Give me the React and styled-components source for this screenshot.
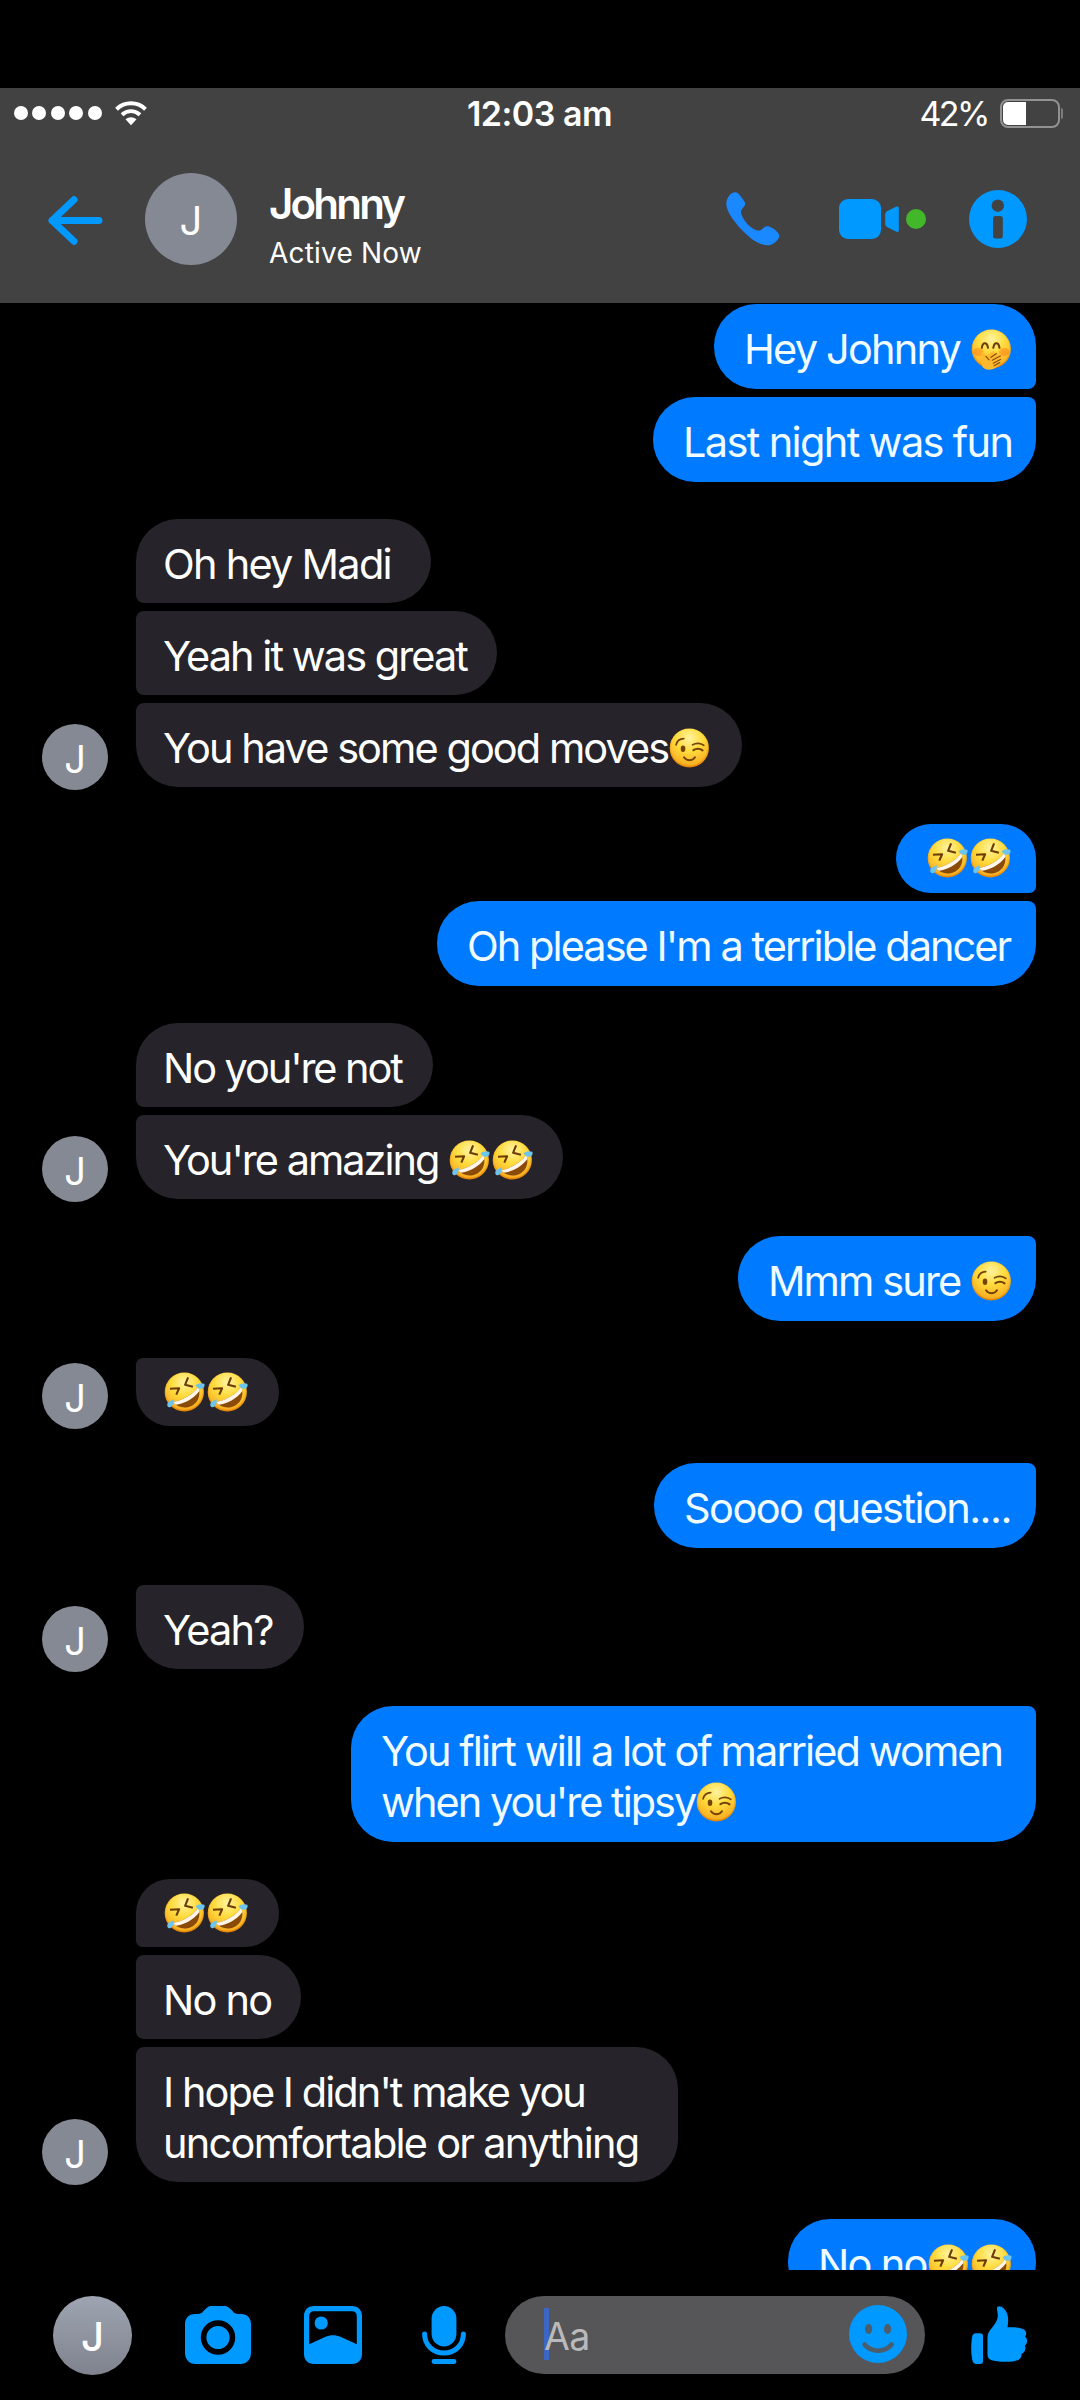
import styled, {createGlobalStyle, css} from "styled-components";

const color = {
    bar: "#424242",
    sent: "#007aff",
    received: "#26242a",
    accent: "#0099ff",
    call: "#1a88ff",
    online: "#42b72a",
    avatar: "#858994",
    input: "#565658",
};

// every line: [text, letter spacing, ...emojis]
const groups = [
    {
        from: "me",
        messages: [
            {width: 322, lines: [["Hey Johnny ", -1.8, "shy"]]},
            {width: 383, lines: [["Last night was fun", -1.65]]},
        ],
    },
    {
        from: "johnny",
        messages: [
            {width: 295, lines: [["Oh hey Madi", -1.75]]},
            {width: 361, lines: [["Yeah it was great", -1.95]]},
            {width: 606, lines: [["You have some good moves", -1.95, "wink"]]},
        ],
    },
    {
        from: "me",
        messages: [
            {width: 140, lines: [["", 0, "rofl", "rofl"]]},
            {width: 599, lines: [["Oh please I'm a terrible dancer", -1.95]]},
        ],
    },
    {
        from: "johnny",
        messages: [
            {width: 297, lines: [["No you're not", -2.1]]},
            {width: 427, lines: [["You're amazing ", -2, "rofl", "rofl"]]},
        ],
    },
    {from: "me", messages: [{width: 298, lines: [["Mmm sure ", -1.9, "wink"]]}]},
    {from: "johnny", messages: [{width: 143, lines: [["", 0, "rofl", "rofl"]]}]},
    {from: "me", messages: [{width: 382, lines: [["Soooo question....", -1.55]]}]},
    {from: "johnny", messages: [{width: 168, lines: [["Yeah?", -1.8]]}]},
    {
        from: "me",
        messages: [
            {
                width: 685,
                lines: [["You flirt will a lot of married women", -1.93], ["when you're tipsy", -2, "wink"]],
            },
        ],
    },
    {
        from: "johnny",
        messages: [
            {width: 143, lines: [["", 0, "rofl", "rofl"]]},
            {width: 165, lines: [["No no", -1.8]]},
            {
                width: 542,
                lines: [["I hope I didn't make you", -1.95], ["uncomfortable or anything", -1.75]],
            },
        ],
    },
    {
        from: "me",
        continues: true,
        messages: [{width: 248, lines: [["No no", -1.7, "rofl", "rofl"]]}],
    },
];

const faces = {
    rofl: (
        <>
            <path d="M5.5 16.8 14.6 16.3 11.8 22.6" fill="none" stroke="#6b3a05" strokeWidth="2.1" strokeLinejoin="round"/>
            <path d="M23.6 5.4 20.6 12.8 28.4 14.8" fill="none" stroke="#6b3a05" strokeWidth="2.1" strokeLinejoin="round"/>
            <path d="M8.5 30C17 29 29 22.5 33.6 14.8C36.5 21.5 34.5 29.5 28.3 33.2C21.5 37.2 12.8 35.8 8.5 30Z" fill="#8a4a08"/>
            <path d="M8.5 30C17 29 29 22.5 33.6 14.8C34.4 16.4 34.7 17.8 34.7 19.3C29 26.8 20 31.8 11.2 32.8Z" fill="#fff5e8"/>
            <path d="M31 13.5C33 11.3 37 10.7 39.8 11.8C41 14.8 38.5 17.3 35.5 16.8C33.5 16.5 32.5 14.5 31 13.5Z" fill="#6cc5ee"/>
            <path d="M9.2 27.2C9.6 30.5 8.5 34 5.5 35.3C2.8 35.6 2 32.6 3.5 30.5C4.7 28.8 7 28.5 9.2 27.2Z" fill="#6cc5ee"/>
        </>
    ),
    wink: (
        <>
            <path d="M6.6 16.8C7.5 13 10.3 10.7 14.2 10.6" fill="none" stroke="#754207" strokeWidth="1.7" strokeLinecap="round"/>
            <path d="M23 16.9C26.3 14.7 31.3 14.7 34.3 17.4" fill="none" stroke="#754207" strokeWidth="1.7" strokeLinecap="round"/>
            <path d="M24 22.2C26.5 20.2 30.5 20.3 33 22.4" fill="none" stroke="#754207" strokeWidth="2.2" strokeLinecap="round"/>
            <ellipse cx="13.5" cy="20.7" rx="2.3" ry="3.3" fill="#754207"/>
            <path d="M14.5 29.3C17.3 33.3 22.7 33.3 25.5 29.3" fill="none" stroke="#754207" strokeWidth="2" strokeLinecap="round"/>
        </>
    ),
    shy: (
        <>
            <ellipse cx="6.8" cy="23" rx="5.2" ry="4" fill="#ff6a13" opacity=".4"/>
            <ellipse cx="32.6" cy="23" rx="5.2" ry="4" fill="#ff6a13" opacity=".4"/>
            <path d="M10.3 18.8C11.2 12.6 15.5 12.6 16.5 18.8" fill="none" stroke="#6b3a05" strokeWidth="2" strokeLinecap="round"/>
            <path d="M21.8 18.8C22.8 12.6 27 12.6 28 18.8" fill="none" stroke="#6b3a05" strokeWidth="2" strokeLinecap="round"/>
            <path d="M9.6 24.2C9.5 22.3 12 22 12.8 24.3L14.5 27.3 20.8 22.6C23 21.3 24.3 23.5 22.6 25L28.5 25.5C30.8 25.7 30.6 28 29.6 29C31 29.8 30.5 31.5 29.2 32.5C29.6 34 28.6 35.4 26.8 36.6C22 41.8 14 42 11.2 38C9 34.5 11 29.5 9.6 24.2Z" fill="#ffb92e"/>
            <path d="M14.5 27.3 17.5 30.8M19.5 28.3 25 24.5M20.8 31.2 28.8 27M21.8 34.2 29 30.5M22.5 36.7 28.3 33.6" fill="none" stroke="#85500a" strokeWidth="1.2" strokeLinecap="round"/>
        </>
    ),
};

function Emoji({name}) {
    return (
        <EmojiIcon viewBox="-1.5 0 43 41" role="img" aria-label={name}>
            <circle cx="19.8" cy="20" r="19.6" fill="url(#face-rim)"/>
            <circle cx="19.8" cy="19.4" r="18.4" fill="url(#face)"/>
            {faces[name]}
        </EmojiIcon>
    );
}

function EmojiGradients() {
    return (
        <HiddenDefs width="0" height="0">
            <defs>
                <linearGradient id="face-rim" x1="0" y1="0" x2="0" y2="1">
                    <stop offset="0" stopColor="#ffd23a"/>
                    <stop offset="1" stopColor="#e6860a"/>
                </linearGradient>
                <radialGradient id="face" cx=".5" cy=".25" r=".8">
                    <stop offset="0" stopColor="#fff3a0"/>
                    <stop offset=".45" stopColor="#ffdc3e"/>
                    <stop offset="1" stopColor="#f8a61b"/>
                </radialGradient>
            </defs>
        </HiddenDefs>
    );
}

function Message({message, side, first, last}) {
    const emojiOnly = message.lines[0][0] === "";

    return (
        <Bubble
            $side={side}
            $width={message.width}
            $emojiOnly={emojiOnly}
            $joinTop={!first}
            $joinBottom={!last}
        >
            {message.lines.map(([text, tracking, ...emojis]) => (
                <Line key={text} $tracking={tracking}>
                    {text}
                    {emojis.map((name, i) => <Emoji key={i} name={name}/>)}
                </Line>
            ))}
        </Bubble>
    );
}

function MessageGroup({group}) {
    const side = group.from === "me" ? "right" : "left";
    const count = group.messages.length;

    return (
        <Group $side={side}>
            {side === "left" && <Avatar $size={66} $font={38}>J</Avatar>}
            <Stack $side={side}>
                {group.messages.map((message, i) => (
                    <Message
                        key={i}
                        message={message}
                        side={side}
                        first={i === 0 && (count > 1 || group.continues)}
                        last={i === count - 1}
                    />
                ))}
            </Stack>
        </Group>
    );
}

export default function App() {
    return (
        <Screen>
            <GlobalStyle/>
            <EmojiGradients/>
            <Header>
                <StatusBar>
                    <Signal>
                        {[0, 1, 2, 3, 4].map(i => <SignalDot key={i}/>)}
                        <WifiIcon viewBox="0 0 32 25">
                            <path d="M1.5 8.2C9.8.4 22.2.4 30.5 8.2" strokeWidth="4"/>
                            <path d="M7 13.8C12.5 9 19.5 9 25 13.8" strokeWidth="4"/>
                            <path d="M10.5 18.3C14 15.4 18 15.4 21.5 18.3L16 24.3Z" fill="#fff" stroke="none"/>
                        </WifiIcon>
                    </Signal>
                    <Clock>12:03 am</Clock>
                    <Power>
                        <Percent>42%</Percent>
                        <Battery>
                            <BatteryLevel/>
                        </Battery>
                        <BatteryCap/>
                    </Power>
                </StatusBar>
                <Toolbar>
                    <BackIcon viewBox="0 0 55 49" $w={55} $h={49}>
                        <path d="M26 3.7 4 24.5 26 45.3M4 24.5H51" fill="none" stroke={color.accent} strokeWidth="7" strokeLinecap="round" strokeLinejoin="round"/>
                    </BackIcon>
                    <HeaderAvatar $size={92} $font={40}>J</HeaderAvatar>
                    <Contact>
                        <Name>Johnny</Name>
                        <Presence>Active Now</Presence>
                    </Contact>
                    <Actions>
                        <Icon viewBox="0 0 54 54" $w={54} $h={54} fill={color.call}>
                            <path d="M9 .3C11 .3 12.5 1.5 14 3.5C16 6.2 19.3 10 19.3 11.7C19.3 14 15 17 15 20C15.5 25 20 31 24 34.5C28 37.5 31 38.6 33 38.6C36.5 38.6 37 34.3 41.3 34.3C45 34.3 53.4 40 53.4 44C53.4 47 47 53 43.5 53.2C37 53.8 29 50.5 19.5 41.5C10 32.5.3 20 .3 12C.3 5 5.5.3 9 .3Z"/>
                        </Icon>
                        <VideoCall>
                            <Icon viewBox="0 0 60 40" $w={60} $h={40} fill={color.accent}>
                                <rect width="42" height="40" rx="9"/>
                                <path d="M48 12.2 57 7.8C59 7 59.8 7.5 59.8 9.5V31C59.8 33 58.8 33.3 57 32.5L48.5 28.3C46.8 27.3 46.2 26.5 46.2 25V15.5C46.2 14 46.8 13 48 12.2Z"/>
                            </Icon>
                            <OnlineDot/>
                        </VideoCall>
                        <Icon viewBox="0 0 58 58" $w={58} $h={58}>
                            <circle cx="29" cy="29" r="29" fill={color.accent}/>
                            <circle cx="28.8" cy="15.7" r="6.2" fill={color.bar}/>
                            <rect x="24" y="26" width="9.8" height="22.6" rx="2.5" fill={color.bar}/>
                        </Icon>
                    </Actions>
                </Toolbar>
            </Header>
            <Conversation>
                {groups.map((group, i) => <MessageGroup key={i} group={group}/>)}
            </Conversation>
            <Composer>
                <ComposerAvatar $size={79} $font={40}>J</ComposerAvatar>
                <ComposerTools>
                    <Icon viewBox="0 0 66 58" $w={66} $h={58}>
                        <path d="M0 18C0 12 4 8 10 8C18 8 17 6 20.5 3C23 .5 25 0 27 0H39C41 0 43 .5 45.5 3C49 6 48 8 56 8C62 8 66 12 66 18V47C66 53.5 61.5 58 55.5 58H10.5C4.5 58 0 53.5 0 47Z" fill={color.accent}/>
                        <circle cx="33" cy="31.5" r="14.4" fill="none" stroke="#000" strokeWidth="5.6"/>
                    </Icon>
                    <Icon viewBox="0 0 58 58" $w={58} $h={58} fill={color.accent}>
                        <path fillRule="evenodd" d="M10 0H48C54 0 58 4 58 10V48C58 54 54 58 48 58H10C4 58 0 54 0 48V10C0 4 4 0 10 0ZM10 5.2C7 5.2 5.2 7 5.2 10V38.3L21 31C26.5 28.5 31.5 28.5 37 31L52.8 38.3V10C52.8 7 51 5.2 48 5.2Z"/>
                        <circle cx="17.2" cy="17" r="6.6"/>
                    </Icon>
                    <Icon viewBox="0 0 44 58" $w={44} $h={58} fill={color.accent}>
                        <rect x="9.6" width="24.8" height="40.4" rx="12.4"/>
                        <path d="M2.6 28C2.6 39 11 47 22 47C33 47 41.4 39 41.4 28" fill="none" stroke={color.accent} strokeWidth="5" strokeLinecap="round"/>
                        <rect x="9.6" y="53" width="24.8" height="5" rx="2.4"/>
                    </Icon>
                </ComposerTools>
                <Input>
                    <Caret/>
                    <Placeholder>Aa</Placeholder>
                    <Icon viewBox="0 0 58 58" $w={58} $h={58}>
                        <circle cx="29" cy="29" r="29" fill={color.accent}/>
                        <ellipse cx="19.6" cy="24" rx="3.6" ry="5" fill="#4d5d6a"/>
                        <ellipse cx="38.6" cy="24" rx="3.6" ry="5" fill="#4d5d6a"/>
                        <path d="M15.6 39.5C22.5 47.8 35.7 47.8 42.6 39.5" fill="none" stroke="#4d5d6a" strokeWidth="4.6" strokeLinecap="round"/>
                    </Icon>
                </Input>
                <Icon viewBox="0 0 56 58" $w={56} $h={58} fill={color.accent}>
                    <path d="M5 27.3H9C11 27.3 12 28.5 12 30.5V55C12 57 11 58 9 58H5.5C3 58 1.8 56.5 1.2 53.5C-.2 46 0 38 1 31.5C1.5 28.7 2.5 27.3 5 27.3Z"/>
                    <path d="M26.5.8C27.8-.5 30.5.2 32.8 2.5C37.6 7 37.8 13.5 36.5 21.3C43 21 50 21.5 53.3 23.8C55.8 25.5 55.5 29 54 30.5C56.8 32.5 56.8 37.5 53.8 39.5C55.3 42.5 54 46.5 50.6 47.8C50.8 52.5 47.5 54.8 42 55.4C35 56 27.5 55.8 21.5 54.5C17.8 53.5 16.5 51.5 16.5 48V31.5C16.5 27.5 18.5 25 21 21.8C24.5 17.5 27 14 26.8 9C26.7 6 25.3 2.5 26.5.8Z"/>
                </Icon>
            </Composer>
        </Screen>
    );
}

const GlobalStyle = createGlobalStyle`
    * {
        box-sizing: border-box;
    }

    body {
        margin: 0;
        background: #000;
        font-family: Inter, "Liberation Sans", sans-serif;
        color: #fff;
    }
`;

const Screen = styled.div`
    display: flex;
    flex-direction: column;
    width: 1080px;
    height: 2400px;
    padding-top: 88px;
    background: #000;
    overflow: hidden;
`;

const HiddenDefs = styled.svg`
    position: absolute;
`;

const Icon = styled.svg`
    display: block;
    flex: none;
    width: ${({$w}) => $w}px;
    height: ${({$h}) => $h}px;
`;

const BackIcon = styled(Icon)`
    margin-top: 2px;
`;

const EmojiIcon = styled.svg`
    display: inline-block;
    width: 43px;
    height: 41px;
    vertical-align: -6px;
`;

const Header = styled.header`
    flex: none;
    height: 215px;
    background: ${color.bar};
`;

const StatusBar = styled.div`
    display: grid;
    grid-template-columns: 1fr auto 1fr;
    align-items: center;
    height: 50px;
    padding: 0 17px 0 14px;
`;

const Signal = styled.div`
    display: flex;
    align-items: center;
    gap: 4.4px;
`;

const SignalDot = styled.span`
    width: 14px;
    height: 14px;
    border-radius: 50%;
    background: #fff;
`;

const WifiIcon = styled.svg`
    width: 32px;
    height: 25px;
    margin-left: 9px;
    fill: none;
    stroke: #fff;
`;

const Clock = styled.span`
    padding-left: 2px;
    font-size: 34px;
    font-weight: 600;
    letter-spacing: -0.5px;
`;

const Power = styled.div`
    display: flex;
    justify-content: flex-end;
    align-items: center;
`;

const Percent = styled.span`
    margin-right: 12px;
    font-size: 34px;
    letter-spacing: -2.5px;
`;

const Battery = styled.div`
    width: 60px;
    height: 29px;
    padding: 1px;
    border: 2px solid #929292;
    border-radius: 8px;
`;

const BatteryLevel = styled.div`
    width: 23px;
    height: 23px;
    border-radius: 5px 0 0 5px;
    background: #fff;
`;

const BatteryCap = styled.div`
    width: 2px;
    height: 11px;
    margin-left: 1px;
    border-radius: 0 2px 2px 0;
    background: #7c7c7c;
`;

const Toolbar = styled.div`
    display: flex;
    align-items: center;
    height: 165px;
    padding: 0 53px 3px 48px;
`;

const Avatar = styled.div`
    display: flex;
    flex: none;
    justify-content: center;
    align-items: center;
    width: ${({$size}) => $size}px;
    height: ${({$size}) => $size}px;
    border-radius: 50%;
    background: ${color.avatar};
    font-size: ${({$font}) => $font}px;
    line-height: 1;
    padding-top: 4px;
`;

const HeaderAvatar = styled(Avatar)`
    margin-left: 42px;
`;

const Contact = styled.div`
    margin-left: 32px;
    padding-top: 18px;
`;

const Name = styled.div`
    margin-bottom: 2px;
    font-size: 42px;
    font-weight: 600;
    line-height: 48px;
    letter-spacing: -2.8px;
`;

const Presence = styled.div`
    font-size: 28px;
    line-height: 46px;
    letter-spacing: 0.2px;
`;

const Actions = styled.div`
    display: flex;
    align-items: center;
    margin-left: auto;
`;

const VideoCall = styled.div`
    display: flex;
    align-items: center;
    gap: 7px;
    margin: 0 43px 0 59px;
`;

const OnlineDot = styled.span`
    width: 20px;
    height: 20px;
    border-radius: 50%;
    background: ${color.online};
`;

const Conversation = styled.main`
    display: flex;
    flex-direction: column;
    gap: 37px;
    flex: none;
    height: 1967px;
    padding: 1px 44px 0 42px;
    overflow: hidden;
`;

const Group = styled.div`
    display: flex;
    flex: none;
    align-items: flex-end;
    gap: 28px;
    justify-content: ${({$side}) => ($side === "right" ? "flex-end" : "flex-start")};

    ${Avatar} {
        margin-bottom: -3px;
    }
`;

const Stack = styled.div`
    display: flex;
    flex-direction: column;
    gap: 8px;
    align-items: ${({$side}) => ($side === "right" ? "flex-end" : "flex-start")};
`;

const sentBubble = css`
    padding: 20px 0 14px 30px;
    background: ${color.sent};
    color: #f0fcff;
    border-radius: 42px
        ${({$joinTop}) => ($joinTop ? "8px" : "42px")}
        ${({$joinBottom}) => ($joinBottom ? "8px" : "42px")}
        42px;
`;

const receivedBubble = css`
    padding: 20px 0 13px 27px;
    background: ${color.received};
    border-radius:
        ${({$joinTop}) => ($joinTop ? "8px" : "42px")}
        42px 42px
        ${({$joinBottom}) => ($joinBottom ? "8px" : "42px")};
`;

const Line = styled.div`
    height: 51px;
    line-height: 51px;
    letter-spacing: ${({$tracking}) => $tracking}px;
    white-space: pre;
`;

const Bubble = styled.div`
    width: ${({$width}) => $width}px;
    font-size: 41.5px;
    ${({$side}) => ($side === "right" ? sentBubble : receivedBubble)}

    ${({$emojiOnly, $side}) => $emojiOnly && css`
        padding-top: 14px;
        padding-bottom: 14px;

        ${Line} {
            display: flex;
            height: ${$side === "right" ? 41 : 40}px;
        }
    `}
`;

const Composer = styled.footer`
    display: flex;
    align-items: center;
    flex: none;
    height: 130px;
    padding: 0 53px;
`;

const ComposerAvatar = styled(Avatar)`
    background: linear-gradient(#9ea4b1, #7f838e);
    font-weight: 500;
`;

const ComposerTools = styled.div`
    display: flex;
    margin: 0 39px 0 53px;
    gap: 53px;

    ${Icon}:last-child {
        margin-left: 7px;
    }
`;

const Input = styled.div`
    display: flex;
    align-items: center;
    width: 420px;
    height: 78px;
    margin-right: 46px;
    padding: 0 18px 2px 39px;
    border-radius: 39px;
    background: ${color.input};

    ${Icon} {
        margin-left: auto;
    }
`;

const Caret = styled.span`
    width: 5px;
    height: 52px;
    margin-right: -5px;
    background: #3c66c4;
`;

const Placeholder = styled.span`
    position: relative;
    padding-top: 5px;
    color: #bababc;
    font-size: 37.5px;
    letter-spacing: -0.6px;
`;
